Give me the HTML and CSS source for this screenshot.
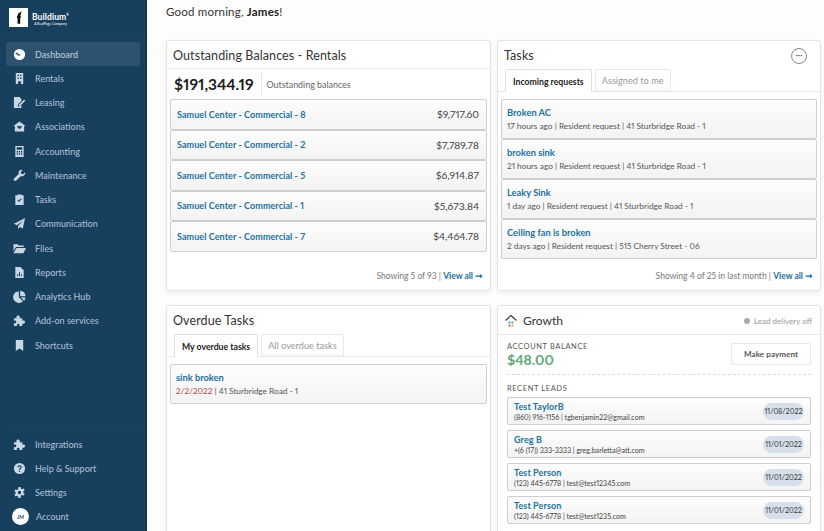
FILE: index.html
```html
<!DOCTYPE html>
<html lang="en">
<head>
<meta charset="utf-8">
<title>Buildium Dashboard</title>
<link rel="stylesheet" href="styles.css">
</head>
<body>
<aside class="sidebar">
  <div class="brand">
    <div class="logo-box"><svg width="20" height="19" viewBox="0 0 20 19"><path fill="#111" d="M8 9.500 10 5 13.500 3.200 12.600 5.300 11.800 8.500 12.800 8.200 12.500 9.600 11.800 10 11.800 16 9 16 9 10Z"/></svg></div>
    <div class="brand-text"><div class="brand-name">Buildium<sup class="tm">®</sup></div><div class="brand-sub">A RealPage Company</div></div>
  </div>
  <nav class="nav">
    <a class="nav-item active"><svg class="ico" viewBox="0 0 14 14"><circle cx="7" cy="7" r="6" fill="#fff"/><path d="M3 5.500 7.500 8" stroke="#28506e" stroke-width="1.600"/></svg><span>Dashboard</span></a>
    <a class="nav-item"><svg class="ico" viewBox="0 0 14 14"><path fill="#c9d7e3" fill-rule="evenodd" d="M3 1h8v12H8.500v-3h-3v3H3ZM4.800 3v1.300h1.600V3Zm2.800 0v1.300h1.600V3ZM4.800 6v1.300h1.600V6Zm2.800 0v1.300h1.600V6Z"/></svg><span>Rentals</span></a>
    <a class="nav-item"><svg class="ico" viewBox="0 0 14 14"><path fill="#c9d7e3" d="M1 1h6l2 2v2.500L5.500 9 5 11.500l2.500-.5L9 9.700V13H1Z"/><path fill="#c9d7e3" d="M6.300 9.500 12 3.800l1.200 1.200-5.700 5.700-1.500.3Z"/></svg><span>Leasing</span></a>
    <a class="nav-item"><svg class="ico" viewBox="0 0 14 14"><path fill="#c9d7e3" fill-rule="evenodd" d="M7 1.500 13.500 6.500H12V12.500H2V6.500H.5ZM7 10l2.200-2.200c.8-1-.6-2.200-1.500-1.300L7 7.200l-.7-.7c-.9-.9-2.300.3-1.500 1.300Z"/></svg><span>Associations</span></a>
    <a class="nav-item"><svg class="ico" viewBox="0 0 14 14"><path fill="#c9d7e3" fill-rule="evenodd" d="M2.500 1h9v12h-9ZM4 2.500v2.500h6V2.500ZM4 6.500V8h1.400V6.500Zm2.300 0V8h1.400V6.500Zm2.300 0V8H10V6.500ZM4 9v1.400h1.400V9Zm2.300 0v1.400h1.400V9Zm2.300 0v1.400H10V9Z"/></svg><span>Accounting</span></a>
    <a class="nav-item"><svg class="ico" viewBox="0 0 14 14"><path fill="#c9d7e3" d="M13 3.500 10.800 5.600 8.800 5.100 8.300 3.200 10.500 1c-1.800-.5-3.900.3-4.400 2.300-.2.700-.1 1.400 0 2L1.200 10.200c-.7.700-.7 1.700 0 2.300.7.700 1.700.6 2.300 0L8.400 7.700c2.700.8 5.400-1.400 4.600-4.200Z"/></svg><span>Maintenance</span></a>
    <a class="nav-item"><svg class="ico" viewBox="0 0 14 14"><path fill="#c9d7e3" fill-rule="evenodd" d="M2.500 2.500H5V1.500h4v1h2.500V13h-9Zm2.300 5.600L6.300 9.800 9.400 6.400 8.600 5.700 6.300 8.300 5.500 7.400Z"/></svg><span>Tasks</span></a>
    <a class="nav-item"><svg class="ico" viewBox="0 0 14 14"><path fill="#c9d7e3" d="M13 1 10.500 12.500 7.200 10.800 5.500 13V9.800L11 3.500 4.300 8.800 1 7.300Z"/></svg><span>Communication</span></a>
    <a class="nav-item"><svg class="ico" viewBox="0 0 14 14"><path fill="#c9d7e3" d="M.5 2.500h4.500l1.200 1.300h5.300V5.500H3.200L.5 10ZM3.800 6.500H14L11.200 12H.5Z"/></svg><span>Files</span></a>
    <a class="nav-item"><svg class="ico" viewBox="0 0 14 14"><path fill="#c9d7e3" fill-rule="evenodd" d="M2.500 1H8l3.500 3.500V13h-9ZM4.500 11h1V8.500h-1Zm2 0h1V6.500h-1Zm2 0h1V9h-1Z"/></svg><span>Reports</span></a>
    <a class="nav-item"><svg class="ico" viewBox="0 0 14 14"><path fill="#c9d7e3" d="M6.300 1.500v6.200l4.400 4.400A6.200 6.200 0 1 1 6.300 1.500ZM7.700.8a6 6 0 0 1 5.800 5.800H7.700ZM8.500 8h5a6 6 0 0 1-1.600 3.500Z"/></svg><span>Analytics Hub</span></a>
    <a class="nav-item"><svg class="ico" viewBox="0 0 14 14"><path fill="#c9d7e3" d="M1 4.500h3c-.8-1.200-.4-3 1.500-3s2.300 1.800 1.500 3h3v2.800c1.200-.8 3-.4 3 1.400s-1.800 2.200-3 1.400V13H6.800c.6-1.200.2-2.500-1.200-2.500S3.800 11.800 4.400 13H1V9.800c1.200.6 2.500.2 2.500-1.200S2.200 6.800 1 7.400Z"/></svg><span>Add-on services</span></a>
    <a class="nav-item"><svg class="ico" viewBox="0 0 14 14"><path fill="#c9d7e3" d="M3 1h8v12L7 10.300 3 13Z"/></svg><span>Shortcuts</span></a>
  </nav>
  <nav class="nav nav-bottom">
    <a class="nav-item"><svg class="ico" viewBox="0 0 14 14"><path fill="#c9d7e3" d="M1 4.500h3c-.8-1.200-.4-3 1.500-3s2.300 1.800 1.500 3h3v2.800c1.200-.8 3-.4 3 1.400s-1.800 2.200-3 1.400V13H6.800c.6-1.200.2-2.500-1.200-2.500S3.800 11.800 4.400 13H1V9.800c1.200.6 2.500.2 2.500-1.200S2.200 6.800 1 7.400Z"/></svg><span>Integrations</span></a>
    <a class="nav-item"><svg class="ico" viewBox="0 0 14 14"><circle cx="7" cy="7" r="6" fill="#c9d7e3"/><path d="M5.200 5.600C5.200 3.500 9 3.700 8.800 5.700 8.700 7 7 6.900 7 8.300" fill="none" stroke="#17405f" stroke-width="1.300"/><circle cx="7" cy="10" r=".8" fill="#17405f"/></svg><span>Help &amp; Support</span></a>
    <a class="nav-item"><svg class="ico" viewBox="0 0 14 14"><path fill="#c9d7e3" fill-rule="evenodd" d="M5.800 1h2.400l.3 1.800 1.200.6 1.600-.8 1.200 2-1.400 1.200v1.400l1.400 1.200-1.200 2-1.600-.8-1.200.6L8.200 13H5.800l-.3-1.800-1.200-.6-1.600.8-1.200-2 1.400-1.200V6.800L1.500 5.600l1.200-2 1.600.8 1.200-.6ZM7 5.200a1.800 1.800 0 1 0 0 3.600 1.800 1.800 0 0 0 0-3.600Z"/></svg><span>Settings</span></a>
    <a class="nav-item account"><span class="avatar">JM</span><span>Account</span></a>
  </nav>
</aside>

<main class="main">
  <p class="greeting">Good morning, <b>James</b>!</p>
  <div class="grid">
    <section class="card">
      <header class="card-head"><h2>Outstanding Balances - Rentals</h2></header>
      <div class="total"><strong>$191,344.19</strong><span>Outstanding balances</span></div>
      <ul class="list balances">
        <li class="row bal"><a>Samuel Center - Commercial - 8</a><span>$9,717.60</span></li>
        <li class="row bal"><a>Samuel Center - Commercial - 2</a><span>$7,789.78</span></li>
        <li class="row bal"><a>Samuel Center - Commercial - 5</a><span>$6,914.87</span></li>
        <li class="row bal"><a>Samuel Center - Commercial - 1</a><span>$5,673.84</span></li>
        <li class="row bal"><a>Samuel Center - Commercial - 7</a><span>$4,464.78</span></li>
      </ul>
      <footer class="card-foot">Showing 5 of 93 |&nbsp; <a>View all ➞</a></footer>
    </section>

    <section class="card">
      <header class="card-head plain"><h2>Tasks</h2><span class="more">•••</span></header>
      <div class="tabs"><span class="tab on">Incoming requests</span><span class="tab">Assigned to me</span></div>
      <ul class="list tasks">
        <li class="row task"><a>Broken AC</a><p>17 hours ago | Resident request | 41 Sturbridge Road - 1</p></li>
        <li class="row task"><a>broken sink</a><p>21 hours ago | Resident request | 41 Sturbridge Road - 1</p></li>
        <li class="row task"><a>Leaky Sink</a><p>1 day ago | Resident request | 41 Sturbridge Road - 1</p></li>
        <li class="row task"><a>Ceiling fan is broken</a><p>2 days ago | Resident request | 515 Cherry Street - 06</p></li>
      </ul>
      <footer class="card-foot">Showing 4 of 25 in last month |&nbsp; <a>View all ➞</a></footer>
    </section>

    <section class="card">
      <header class="card-head plain"><h2>Overdue Tasks</h2></header>
      <div class="tabs"><span class="tab on">My overdue tasks</span><span class="tab">All overdue tasks</span></div>
      <ul class="list tasks">
        <li class="row task"><a>sink broken</a><p><em>2/2/2022</em> | 41 Sturbridge Road - 1</p></li>
      </ul>
    </section>

    <section class="card">
      <header class="card-head growth-head">
        <svg class="growth-ico" width="14" height="14" viewBox="0 0 14 14"><path d="M1.500 6.500 7 1.500l5.500 5" fill="none" stroke="#333" stroke-width="1.100"/><rect x="4.500" y="7.500" width="2" height="2" fill="#5a9bb5"/><rect x="7.500" y="7.500" width="2" height="2" fill="#6fae7d"/><rect x="4.500" y="10.500" width="2" height="2" fill="#d9734f"/><rect x="7.500" y="10.500" width="2" height="2" fill="#e2b552"/></svg>
        <h2>Growth</h2><span class="delivery"><i class="dot"></i>Lead delivery off</span>
      </header>
      <div class="growth-body">
        <div class="balance">
          <div><div class="eyebrow">ACCOUNT BALANCE</div><div class="amount">$48.00</div></div>
          <button class="pay">Make payment</button>
        </div>
        <div class="eyebrow leads-title">RECENT LEADS</div>
        <ul class="leads">
          <li class="row lead"><div><a>Test TaylorB</a><p>(860) 916-1156 | tgbenjamin22@gmail.com</p></div><span class="pill">11/08/2022</span></li>
          <li class="row lead"><div><a>Greg B</a><p>+(6 (17)) 333-3333 | greg.barletta@att.com</p></div><span class="pill">11/01/2022</span></li>
          <li class="row lead"><div><a>Test Person</a><p>(123) 445-6778 | test@test12345.com</p></div><span class="pill">11/01/2022</span></li>
          <li class="row lead"><div><a>Test Person</a><p>(123) 445-6778 | test@test1235.com</p></div><span class="pill">11/01/2022</span></li>
        </ul>
      </div>
    </section>
  </div>
</main>
</body>
</html>
```
FILE: styles.css
```css
* { box-sizing: border-box; }
html, body { margin: 0; height: 531px; overflow: hidden; }
body { display: flex; font-family: "Lato", "Open Sans", sans-serif; font-variant-numeric: proportional-nums; background: #fdfdfd; color: #333; }
ul { list-style: none; margin: 0; padding: 0; }
p, h2 { margin: 0; font-weight: 400; }

/* Sidebar */
.sidebar { width: 147px; flex: none; height: 531px; background: #17405f; border-right: 1px solid #102f47; display: flex; flex-direction: column; }
.brand { height: 36px; display: flex; align-items: flex-start; gap: 4px; padding: 8px 0 0 9px; border-bottom: 1px solid #1c4564; }
.logo-box { width: 19px; height: 19px; background: #fff; display: flex; align-items: center; justify-content: center; }
.brand-text { color: #fff; padding-top: 5px; }
.brand-name { font-size: 8.500px; font-weight: 700; line-height: 9px; letter-spacing: .1px; }
.tm { font-size: 3px; line-height: 0; }
.brand-sub { font-size: 3.500px; line-height: 5px; text-align: center; }
.nav { display: flex; flex-direction: column; padding: 6px 6px 0; }
.nav-item { height: 24.250px; display: flex; align-items: center; gap: 9px; padding-left: 7px; font-size: 9px; font-weight: 500; color: #a9bdd0; border-radius: 3px; }
.nav-item.active { background: #2c526f; color: #b8c9d8; }
.ico { width: 13px; height: 13px; flex: none; }
.nav-bottom { margin: auto 7px 0; padding: 6px 0 2px; border-top: 1px solid #1c4564; }
.nav-bottom .nav-item { padding-left: 6px; }
.nav-item.account { padding-left: 5px; gap: 7px; }
.avatar { width: 17px; height: 17px; border-radius: 50%; background: #fff; color: #17405f; font-size: 5px; font-weight: 700; display: flex; align-items: center; justify-content: center; }

/* Main */
.main { flex: 1; min-width: 0; padding: 0 3px 0 19px; }
.greeting { height: 40px; font-size: 11.500px; line-height: 23px; color: #333; letter-spacing: .2px; }
.greeting b { color: #222; }
.grid { display: grid; grid-template-columns: 325px 324px; grid-template-rows: 251px 240px; column-gap: 6px; row-gap: 14px; }
.card { background: #fff; border: 1px solid #e3e3e3; border-radius: 3px; box-shadow: 0 2px 5px rgba(0,0,0,.06); display: flex; flex-direction: column; position: relative; }
.card-head { height: 28px; padding: 1px 6px 0; display: flex; align-items: center; border-bottom: 1px solid #e6e6e6; flex: none; }
.card-head.plain { border-bottom: 0; justify-content: space-between; }
h2 { font-size: 12.500px; color: #333; letter-spacing: .1px; }
.more { width: 16px; height: 16px; margin-right: 7px; border: 1px solid #888; border-radius: 50%; font-size: 4px; color: #555; display: flex; align-items: center; justify-content: center; }

.total { height: 30px; flex: none; display: flex; align-items: center; padding-left: 7px; }
.total strong { font-size: 15.500px; font-weight: 700; color: #1c1c1c; padding-right: 7px; height: 23px; line-height: 23px; border-right: 1px solid #e3e3e3; margin-right: 5px; }
.total span { font-size: 8.900px; color: #666; }

.list { margin: 0 3px; }
.row { background: linear-gradient(#fdfdfd, #f3f3f3); border: 1px solid #cfcfcf; border-radius: 2px; }
.row a { color: #23719e; font-weight: 700; }
.bal { height: 30.500px; display: flex; align-items: center; justify-content: space-between; padding: 0 7px 0 6px; }
.bal a { font-size: 9px; letter-spacing: .07px; }
.bal span { font-size: 10.200px; color: #444; }
.card-foot { margin-top: auto; height: 28px; display: flex; justify-content: flex-end; align-items: center; padding-right: 7px; font-size: 8.500px; color: #777; }
.card-foot a { color: #23719e; font-weight: 700; }

.tabs { height: 23px; flex: none; display: flex; gap: 3px; padding: 0 7px; border-bottom: 1px solid #e6e6e6; }
.tab { height: 22px; padding: 0 6px; display: flex; align-items: center; font-size: 9.200px; color: #999; border: 1px solid #e8e8e8; border-bottom: 0; border-radius: 2px 2px 0 0; box-shadow: inset 0 -3px 3px -2px #eee; }
.tab.on { color: #222; font-weight: 700; background: #fff; height: 23px; border-color: #dedede; box-shadow: none; font-size: 8.700px; padding: 0 7px; }
.tasks { margin-top: 7px; }
.task { height: 40px; padding: 5px 5px 0; }
.task a { display: block; font-size: 9.300px; line-height: 15px; }
.task p { font-size: 8.300px; line-height: 13px; color: #555; }
.task em { font-style: normal; color: #b5423c; }

.growth-head { height: 29px; }
.growth-head h2 { font-size: 12px; letter-spacing: 0; }
.growth-ico { margin-right: 5px; }
.delivery { margin-left: auto; margin-right: 2px; font-size: 8px; color: #999; display: flex; align-items: center; gap: 4px; }
.dot { width: 6px; height: 6px; border-radius: 50%; background: #aaa; }
.growth-body { padding: 0 9px; }
.balance { display: flex; justify-content: space-between; align-items: flex-start; height: 40px; padding: 7px 0 2px; border-bottom: 1px dashed #ddd; }
.eyebrow { font-size: 7.500px; color: #555; letter-spacing: .6px; line-height: 9px; }
.amount { font-size: 14px; font-weight: 700; color: #5fa777; line-height: 17px; }
.pay { width: 80px; height: 22px; margin-top: 1px; background: #fff; border: 1px solid #e6e6e6; border-radius: 2px; font: 700 8px "Lato", sans-serif; color: #555; letter-spacing: .1px; }
.leads-title { margin-top: 9px; height: 12px; }
.leads { display: flex; flex-direction: column; gap: 5px; margin-top: 1px; }
.lead { height: 28px; display: flex; justify-content: space-between; align-items: center; padding: 0 7px 0 6px; }
.lead a { display: block; font-size: 9px; line-height: 12px; letter-spacing: .1px; }
.lead p { font-size: 7.100px; line-height: 9px; color: #444; }
.pill { width: 41px; height: 17px; background: #d6dfea; border-radius: 9px; font-size: 7.200px; color: #333; display: flex; align-items: center; justify-content: center; margin-right: -1px; }
```
